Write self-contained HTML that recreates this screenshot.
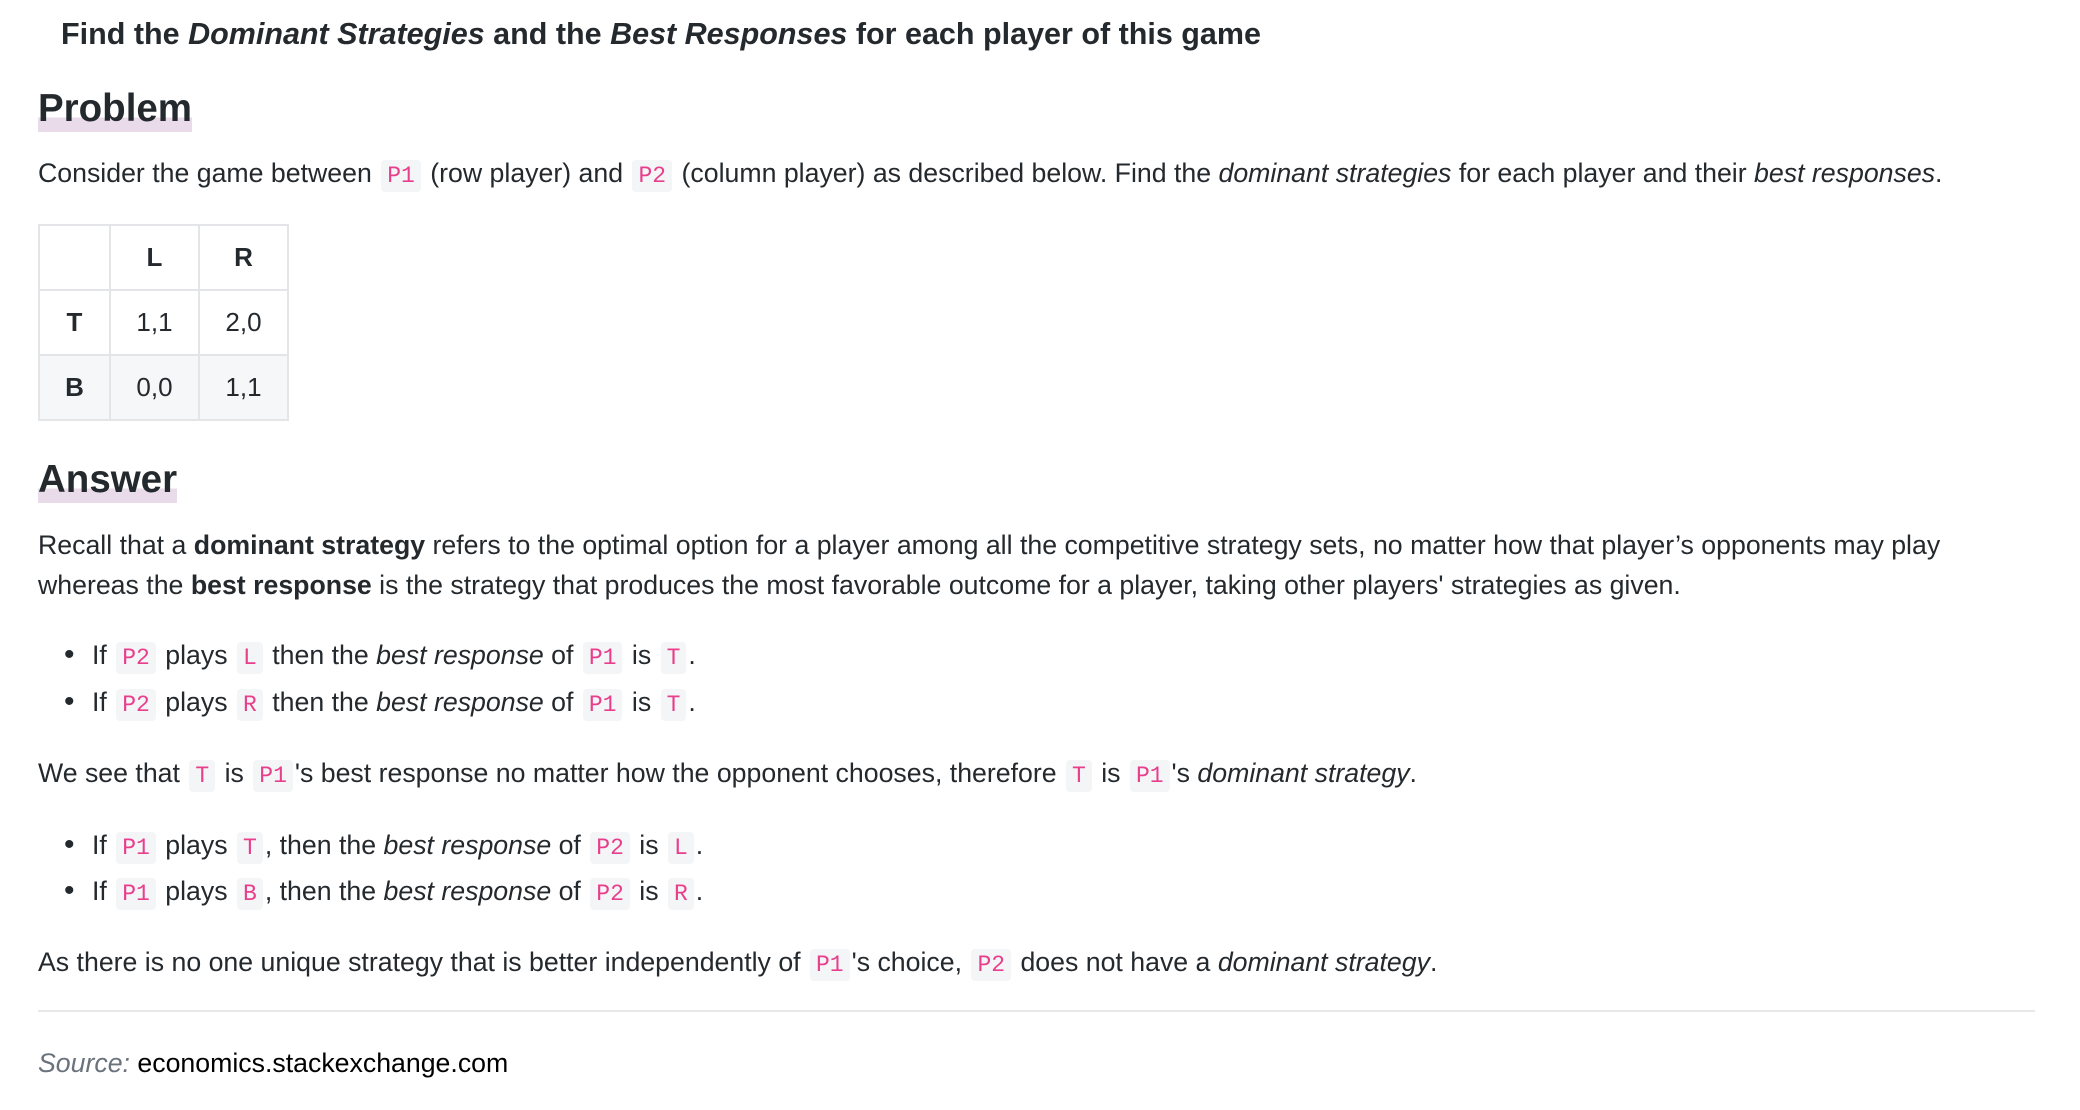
<!DOCTYPE html>
<html><head><meta charset="utf-8"><style>
body{margin:0;width:2080px;height:1110px;background:#fff;color:#24292e;font-family:"Liberation Sans",Arial,sans-serif;position:relative;overflow:hidden}
.l{position:absolute;left:38px;white-space:nowrap;font-size:26.7px;line-height:40px}
code{font-family:"Liberation Mono",monospace;font-size:23px;color:#e83e8c;background:#f4f5f6;border-radius:4px;padding:3px 6px;margin:0 2px}
h1{position:absolute;left:61px;top:14px;margin:0;font-size:30.5px;white-space:nowrap;line-height:40px}
h2{position:absolute;left:38px;margin:0;font-size:38.5px;line-height:46px;background:linear-gradient(transparent 68%,#eadbea 68%)}
table{position:absolute;left:38px;top:224px;border-collapse:collapse;font-size:26px}
td{border:2px solid #e3e5e8;height:63px;text-align:center;padding:0}
.b{font-weight:bold}
hr{position:absolute;left:38px;top:1010px;width:1997px;margin:0;border:0;border-top:2px solid #e6e8ea}
.d{position:absolute;left:-28px;font-size:30px}
</style></head><body>
<h1>Find the <i>Dominant Strategies</i> and the <i>Best Responses</i> for each player of this game</h1>
<h2 style="top:86px">Problem</h2>
<div class="l" style="top:153px">Consider the game between <code>P1</code> (row player) and <code>P2</code> (column player) as described below. Find the <i>dominant strategies</i> for each player and their <i>best responses</i>.</div>
<table>
<tr><td style="width:69px"></td><td class="b" style="width:87px">L</td><td class="b" style="width:87px">R</td></tr>
<tr><td class="b">T</td><td>1,1</td><td>2,0</td></tr>
<tr style="background:#f6f7f9"><td class="b">B</td><td>0,0</td><td>1,1</td></tr>
</table>
<h2 style="top:457px">Answer</h2>
<div class="l" style="top:525px">Recall that a <b>dominant strategy</b> refers to the optimal option for a player among all the competitive strategy sets, no matter how that player’s opponents may play</div>
<div class="l" style="top:565px">whereas the <b>best response</b> is the strategy that produces the most favorable outcome for a player, taking other players' strategies as given.</div>
<div class="l" style="top:635px;left:92px"><span class="d">•</span>If <code>P2</code> plays <code>L</code> then the <i>best response</i> of <code>P1</code> is <code>T</code>.</div>
<div class="l" style="top:682px;left:92px"><span class="d">•</span>If <code>P2</code> plays <code>R</code> then the <i>best response</i> of <code>P1</code> is <code>T</code>.</div>
<div class="l" style="top:753px">We see that <code>T</code> is <code>P1</code>'s best response no matter how the opponent chooses, therefore <code>T</code> is <code>P1</code>'s <i>dominant strategy</i>.</div>
<div class="l" style="top:825px;left:92px"><span class="d">•</span>If <code>P1</code> plays <code>T</code>, then the <i>best response</i> of <code>P2</code> is <code>L</code>.</div>
<div class="l" style="top:871px;left:92px"><span class="d">•</span>If <code>P1</code> plays <code>B</code>, then the <i>best response</i> of <code>P2</code> is <code>R</code>.</div>
<div class="l" style="top:942px">As there is no one unique strategy that is better independently of <code>P1</code>'s choice, <code>P2</code> does not have a <i>dominant strategy</i>.</div>
<hr>
<div class="l" style="top:1043px;color:#000"><i style="color:#6a737d">Source:</i> economics.stackexchange.com</div>
</body></html>
